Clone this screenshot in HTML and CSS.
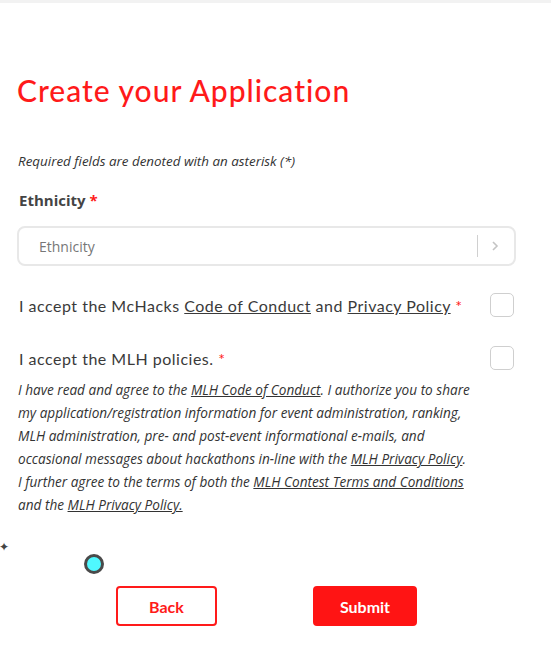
FILE: index.html
```html
<!DOCTYPE html>
<html lang="en">
<head>
<meta charset="utf-8">
<title>Create your Application</title>
<link rel="stylesheet" href="styles.css">
</head>
<body>
<div class="topbar"></div>
<main class="form">
  <h1 class="title">Create your Application</h1>
  <p class="note">Required fields are denoted with an asterisk (*)</p>
  <label class="field-label">Ethnicity <span class="req">*</span></label>
  <div class="select">
    <span class="placeholder">Ethnicity</span>
    <span class="sep"></span>
    <svg class="chevron" width="10" height="12" viewBox="0 0 10 12"><path d="M3 2 L7 6 L3 10" fill="none" stroke="#c4c4c4" stroke-width="1.6"/></svg>
  </div>
  <div class="check-row first">
    <span class="check-label">I accept the McHacks <a href="#">Code of Conduct</a> and <a href="#">Privacy Policy</a> <span class="req">*</span></span>
    <span class="box"></span>
  </div>
  <div class="check-row second">
    <span class="check-label">I accept the MLH policies. <span class="req">*</span></span>
    <span class="box"></span>
  </div>
  <p class="legal">I have read and agree to the <a href="#">MLH Code of Conduct</a>. I authorize you to share my application/registration information for event administration, ranking, MLH administration, pre- and post-event informational e-mails, and occasional messages about hackathons in-line with the <a href="#">MLH Privacy Policy</a>. I further agree to the terms of both the <a href="#">MLH Contest Terms and Conditions</a> and the <a href="#">MLH Privacy Policy.</a></p>
  <div class="actions">
    <button class="btn back" type="button">Back</button>
    <button class="btn submit" type="button">Submit</button>
  </div>
</main>
<span class="sparkle">✦</span>
<span class="cursor-dot"></span>
</body>
</html>
```
FILE: styles.css
```css
html, body {
  margin: 0;
  padding: 0;
  background: #fff;
}
body {
  position: relative;
  min-height: 667px;
  font-family: "Lato", "Open Sans", sans-serif;
  color: #3d3d3d;
}
.topbar {
  height: 3px;
  background: #f2f2f2;
}
.form {
  width: 499px;
  padding-left: 17px;
  display: flex;
  flex-direction: column;
}
.title {
  margin: 69px 0 0 0;
  font-family: "Lato", sans-serif;
  font-weight: 500;
  font-size: 30px;
  line-height: 36px;
  color: #ff1a1a;
  letter-spacing: 1px;
}
.note {
  margin: 45px 0 0 1px;
  font-family: "Open Sans", sans-serif;
  font-style: italic;
  font-size: 13.4px;
  line-height: 16px;
  color: #333;
}
.field-label {
  margin: 21px 0 0 2px;
  font-family: "Open Sans", sans-serif;
  font-weight: 700;
  font-size: 15px;
  line-height: 20px;
  color: #444;
}
.req {
  color: #ff1a1a;
}
.select {
  margin-top: 16px;
  height: 40px;
  box-sizing: border-box;
  border: 2px solid #e8e8e8;
  border-radius: 8px;
  display: flex;
  align-items: center;
  padding: 0 14px 0 20px;
}
.placeholder {
  flex: 1;
  font-family: "Open Sans", sans-serif;
  font-size: 14px;
  color: #777;
}
.sep {
  width: 1px;
  height: 22px;
  background: #d0d0d0;
  margin-right: 12px;
}
.chevron {
  display: block;
}
.check-row {
  display: flex;
  align-items: center;
  justify-content: space-between;
  height: 24px;
  padding-right: 2px;
}
.check-row.first {
  margin-top: 27px;
}
.check-row.second {
  margin-top: 29px;
}
.check-label {
  margin-left: 2px;
  font-family: "Lato", sans-serif;
  font-size: 16px;
  letter-spacing: 0.5px;
  color: #3a3a3a;
}
.check-label a, .legal a {
  color: inherit;
  text-decoration: underline;
}
.box {
  width: 24px;
  height: 24px;
  box-sizing: border-box;
  border: 1px solid #cfcfcf;
  border-radius: 5px;
}
.legal {
  margin: 8px 0 0 1px;
  width: 452px;
  font-family: "Open Sans", sans-serif;
  font-style: italic;
  font-size: 13.6px;
  line-height: 23px;
  color: #333;
}
.actions {
  margin-top: 70px;
  display: flex;
  justify-content: center;
  gap: 96px;
}
.btn {
  width: 101px;
  height: 40px;
  box-sizing: border-box;
  border-radius: 4px;
  font-family: "Lato", sans-serif;
  font-weight: 700;
  font-size: 16px;
  cursor: pointer;
}
.back {
  background: #fff;
  color: #ff1a1a;
  border: 2px solid #ff1a1a;
}
.submit {
  width: 104px;
  background: #ff1414;
  color: #fff;
  border: 2px solid #ff1414;
}
.sparkle {
  position: absolute;
  left: -1px;
  top: 539px;
  font-size: 12px;
  line-height: 16px;
  color: #444;
}
.cursor-dot {
  position: absolute;
  left: 84px;
  top: 554px;
  width: 20px;
  height: 20px;
  box-sizing: border-box;
  border: 3px solid #4a4a4a;
  border-radius: 50%;
  background: #4ff8ff;
}
```
